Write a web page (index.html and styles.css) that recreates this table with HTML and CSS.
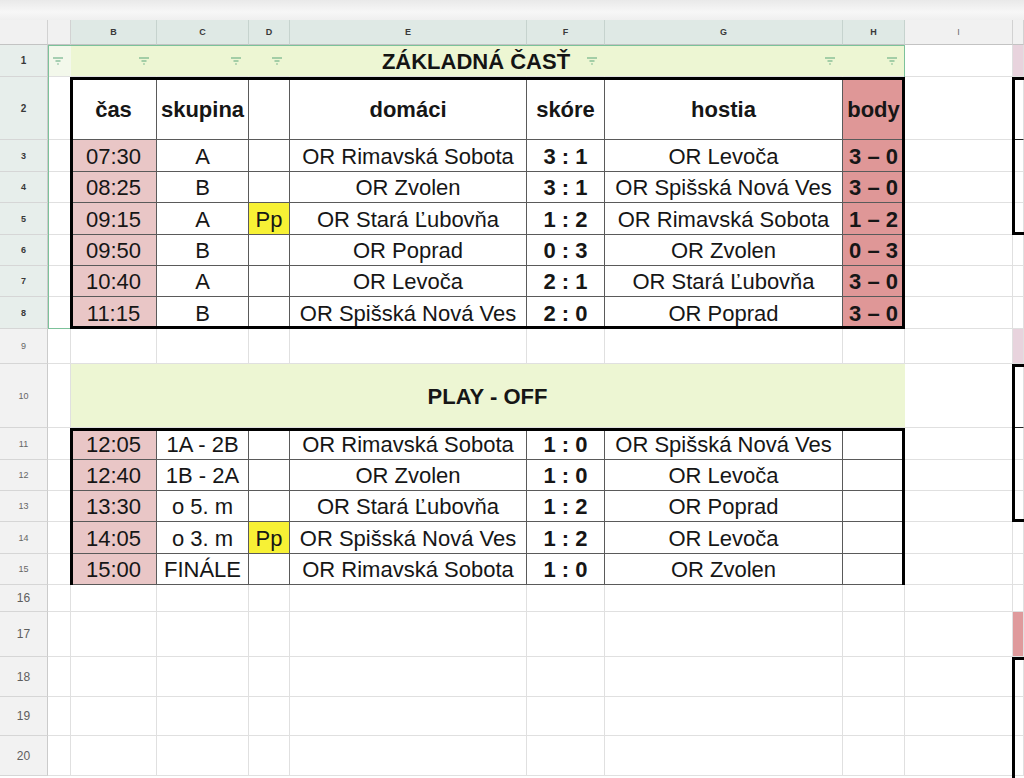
FILE: index.html
```html
<!DOCTYPE html>
<html lang="sk">
<head>
<meta charset="utf-8">
<title>Rozpis</title>
<link rel="stylesheet" href="styles.css">
</head>
<body>
<div class="sheet">
  <div class="layer cells">
    <div class="topbar"></div>

    <div class="ch"></div><div class="ch"></div><div class="ch sel">B</div><div class="ch sel">C</div><div class="ch sel">D</div><div class="ch sel">E</div><div class="ch sel">F</div><div class="ch sel">G</div><div class="ch sel">H</div><div class="ch">I</div><div class="ch"></div>

    <div class="rh sel r1">1</div>
    <div class="c ga fc"><svg class="fi" viewBox="0 0 10 8" width="10" height="8"><path d="M0 1h10M2.5 4h5M4.3 7h1.4"/></svg></div>
    <div class="c g fc"><svg class="fi" viewBox="0 0 10 8" width="10" height="8"><path d="M0 1h10M2.5 4h5M4.3 7h1.4"/></svg></div>
    <div class="c g fc"><svg class="fi" viewBox="0 0 10 8" width="10" height="8"><path d="M0 1h10M2.5 4h5M4.3 7h1.4"/></svg></div>
    <div class="c g fc"><svg class="fi" viewBox="0 0 10 8" width="10" height="8"><path d="M0 1h10M2.5 4h5M4.3 7h1.4"/></svg></div>
    <div class="c g"></div>
    <div class="c g fc"><svg class="fi" viewBox="0 0 10 8" width="10" height="8"><path d="M0 1h10M2.5 4h5M4.3 7h1.4"/></svg></div>
    <div class="c g fc"><svg class="fi" viewBox="0 0 10 8" width="10" height="8"><path d="M0 1h10M2.5 4h5M4.3 7h1.4"/></svg></div>
    <div class="c g fc"><svg class="fi" viewBox="0 0 10 8" width="10" height="8"><path d="M0 1h10M2.5 4h5M4.3 7h1.4"/></svg></div>
    <div class="c"></div><div class="c jl"></div>

    <div class="rh sel r1">2</div><div class="c"></div>
    <div class="c t b hd">čas</div><div class="c t b hd">skupina</div><div class="c t"></div><div class="c t b hd">domáci</div><div class="c t b hd">skóre</div><div class="c t b hd">hostia</div><div class="c t pt hd">body</div>
    <div class="c"></div><div class="c jd"></div>

    <div class="rh sel">3</div><div class="c"></div>
    <div class="c t tm">07:30</div><div class="c t">A</div><div class="c t"></div><div class="c t">OR Rimavská Sobota</div><div class="c t b">3 : 1</div><div class="c t">OR Levoča</div><div class="c t pt">3 – 0</div>
    <div class="c"></div><div class="c"></div>

    <div class="rh sel">4</div><div class="c"></div>
    <div class="c t tm">08:25</div><div class="c t">B</div><div class="c t"></div><div class="c t">OR Zvolen</div><div class="c t b">3 : 1</div><div class="c t">OR Spišská Nová Ves</div><div class="c t pt">3 – 0</div>
    <div class="c"></div><div class="c"></div>

    <div class="rh sel">5</div><div class="c"></div>
    <div class="c t tm">09:15</div><div class="c t">A</div><div class="c t pp">Pp</div><div class="c t">OR Stará Ľubovňa</div><div class="c t b">1 : 2</div><div class="c t">OR Rimavská Sobota</div><div class="c t pt">1 – 2</div>
    <div class="c"></div><div class="c"></div>

    <div class="rh sel">6</div><div class="c"></div>
    <div class="c t tm">09:50</div><div class="c t">B</div><div class="c t"></div><div class="c t">OR Poprad</div><div class="c t b">0 : 3</div><div class="c t">OR Zvolen</div><div class="c t pt">0 – 3</div>
    <div class="c"></div><div class="c"></div>

    <div class="rh sel">7</div><div class="c"></div>
    <div class="c t tm">10:40</div><div class="c t">A</div><div class="c t"></div><div class="c t">OR Levoča</div><div class="c t b">2 : 1</div><div class="c t">OR Stará Ľubovňa</div><div class="c t pt">3 – 0</div>
    <div class="c"></div><div class="c"></div>

    <div class="rh sel">8</div><div class="c"></div>
    <div class="c t tm">11:15</div><div class="c t">B</div><div class="c t"></div><div class="c t">OR Spišská Nová Ves</div><div class="c t b">2 : 0</div><div class="c t">OR Poprad</div><div class="c t pt">3 – 0</div>
    <div class="c"></div><div class="c"></div>

    <div class="rh">9</div><div class="c"></div><div class="c"></div><div class="c"></div><div class="c"></div><div class="c"></div><div class="c"></div><div class="c"></div><div class="c"></div><div class="c"></div><div class="c jl"></div>

    <div class="rh">10</div><div class="c"></div>
    <div class="c g b span7 po">PLAY - OFF</div>
    <div class="c"></div><div class="c jd"></div>

    <div class="rh">11</div><div class="c"></div>
    <div class="c t tm">12:05</div><div class="c t">1A - 2B</div><div class="c t"></div><div class="c t">OR Rimavská Sobota</div><div class="c t b">1 : 0</div><div class="c t">OR Spišská Nová Ves</div><div class="c t"></div>
    <div class="c"></div><div class="c"></div>

    <div class="rh">12</div><div class="c"></div>
    <div class="c t tm">12:40</div><div class="c t">1B - 2A</div><div class="c t"></div><div class="c t">OR Zvolen</div><div class="c t b">1 : 0</div><div class="c t">OR Levoča</div><div class="c t"></div>
    <div class="c"></div><div class="c"></div>

    <div class="rh">13</div><div class="c"></div>
    <div class="c t tm">13:30</div><div class="c t">o 5. m</div><div class="c t"></div><div class="c t">OR Stará Ľubovňa</div><div class="c t b">1 : 2</div><div class="c t">OR Poprad</div><div class="c t"></div>
    <div class="c"></div><div class="c"></div>

    <div class="rh">14</div><div class="c"></div>
    <div class="c t tm">14:05</div><div class="c t">o 3. m</div><div class="c t pp">Pp</div><div class="c t">OR Spišská Nová Ves</div><div class="c t b">1 : 2</div><div class="c t">OR Levoča</div><div class="c t"></div>
    <div class="c"></div><div class="c"></div>

    <div class="rh">15</div><div class="c"></div>
    <div class="c t tm">15:00</div><div class="c t">FINÁLE</div><div class="c t"></div><div class="c t">OR Rimavská Sobota</div><div class="c t b">1 : 0</div><div class="c t">OR Zvolen</div><div class="c t"></div>
    <div class="c"></div><div class="c"></div>

    <div class="rh big">16</div><div class="c"></div><div class="c"></div><div class="c"></div><div class="c"></div><div class="c"></div><div class="c"></div><div class="c"></div><div class="c"></div><div class="c"></div><div class="c"></div>
    <div class="rh big">17</div><div class="c"></div><div class="c"></div><div class="c"></div><div class="c"></div><div class="c"></div><div class="c"></div><div class="c"></div><div class="c"></div><div class="c"></div><div class="c jr"></div>
    <div class="rh big">18</div><div class="c"></div><div class="c"></div><div class="c"></div><div class="c"></div><div class="c"></div><div class="c"></div><div class="c"></div><div class="c"></div><div class="c"></div><div class="c"></div>
    <div class="rh big">19</div><div class="c"></div><div class="c"></div><div class="c"></div><div class="c"></div><div class="c"></div><div class="c"></div><div class="c"></div><div class="c"></div><div class="c"></div><div class="c"></div>
    <div class="rh big">20</div><div class="c"></div><div class="c"></div><div class="c"></div><div class="c"></div><div class="c"></div><div class="c"></div><div class="c"></div><div class="c"></div><div class="c"></div><div class="c"></div>
  </div>

  <div class="layer overlay">
    <div class="flt"></div>
    <div class="title">ZÁKLADNÁ ČASŤ</div>
    <div class="fr fr1"></div>
    <div class="fr fr2"></div>
    <div class="jb jb1"></div>
    <div class="jb jb2"></div>
    <div class="jb jb3"></div>
  </div>
</div>
</body>
</html>
```
FILE: styles.css
```css
html, body {
  margin: 0;
  background: #ffffff;
  font-family: "Liberation Sans", Arial, sans-serif;
}

.sheet {
  display: grid;
  width: 1024px;
  height: 778px;
  overflow: hidden;
}

.layer {
  grid-area: 1 / 1;
  display: grid;
  grid-template-columns: 48px 23px 86px 92px 41px 237px 78px 238px 62px 108px 11px;
  grid-template-rows: 20px 25px 32px 63px 32px 31px 32px 31px 31px 32px 35px 64px 32px 31px 31px 32px 31px 27px 45px 40px 39px 40px 2px;
}

.overlay {
  pointer-events: none;
}

.topbar {
  grid-column: 1 / -1;
  background: linear-gradient(#e9e9e9, #f7f7f7 60%, #efefef);
}

/* column headers */
.ch {
  box-sizing: border-box;
  background: #f1f1f1;
  border-right: 1px solid #d2d2d2;
  border-bottom: 1px solid #c3c3c3;
  display: flex;
  align-items: center;
  justify-content: center;
  font-size: 9px;
  color: #6c6c6c;
}

.ch.sel {
  background: #dfe9e5;
  color: #3a3a3a;
  font-weight: bold;
  border-right-color: #c6d3ce;
}

/* row headers */
.rh {
  box-sizing: border-box;
  background: #f2f2f2;
  border-right: 1px solid #cbcbcb;
  border-bottom: 1px solid #d6d6d6;
  display: flex;
  align-items: center;
  justify-content: center;
  font-size: 9px;
  color: #666666;
}

.rh.sel {
  background: #e7eeeb;
  color: #383838;
  font-weight: bold;
}

.rh.r1 {
  font-size: 10px;
}

.rh.big {
  font-size: 12px;
  color: #5e5e5e;
}

/* cells */
.c {
  box-sizing: border-box;
  min-width: 0;
  border-right: 1px solid #e0e0e0;
  border-bottom: 1px solid #e0e0e0;
  display: flex;
  align-items: center;
  justify-content: center;
  font-size: 22px;
  color: #161616;
  white-space: nowrap;
}

.c.t {
  border-right-color: #5a5a5a;
  border-bottom-color: #5a5a5a;
  padding-top: 2px;
}

.c.hd {
  padding-top: 4px;
}

.c.po {
  padding-top: 2px;
}

.b {
  font-weight: bold;
}

.tm {
  background: #e9c6c6;
}

.pt {
  background: #df9797;
  font-weight: bold;
}

.pp {
  background: #f7f135;
}

.c.g {
  background: #edf6d3;
  border-right-color: transparent;
}

.c.ga {
  background: #f3f8eb;
  border-right-color: transparent;
}

.fc {
  justify-content: flex-end;
  padding-right: 7px;
}

.fi {
  display: block;
  fill: none;
  stroke: #5aa57a;
  stroke-width: 1.2;
}

.span7 {
  grid-column: span 7;
}

.jl {
  background: #e8d3dd;
}

.jr {
  background: #df9a9c;
}

.c.jd {
  border-bottom: 1px solid #222222;
}

/* overlay frames */
.flt {
  grid-column: 2 / 10;
  grid-row: 3 / 11;
  border: 1px solid #7cc29a;
}

.title {
  grid-column: 3 / 10;
  grid-row: 3;
  display: flex;
  align-items: center;
  justify-content: center;
  padding-right: 24px;
  padding-top: 1px;
  font-size: 22px;
  font-weight: bold;
  color: #141414;
  white-space: nowrap;
}

.fr {
  border: 3px solid #000000;
  margin-left: -1px;
}

.fr1 {
  grid-column: 3 / 10;
  grid-row: 4 / 11;
}

.fr2 {
  grid-column: 3 / 10;
  grid-row: 13 / 18;
  border-bottom: 0;
}

.jb {
  grid-column: 11;
  border: 3px solid #000000;
  border-right: 0;
  margin-left: -1px;
}

.jb1 {
  grid-row: 4 / 8;
}

.jb2 {
  grid-row: 12 / 16;
}

.jb3 {
  grid-row: 20 / 24;
  border-bottom: 0;
}
```
